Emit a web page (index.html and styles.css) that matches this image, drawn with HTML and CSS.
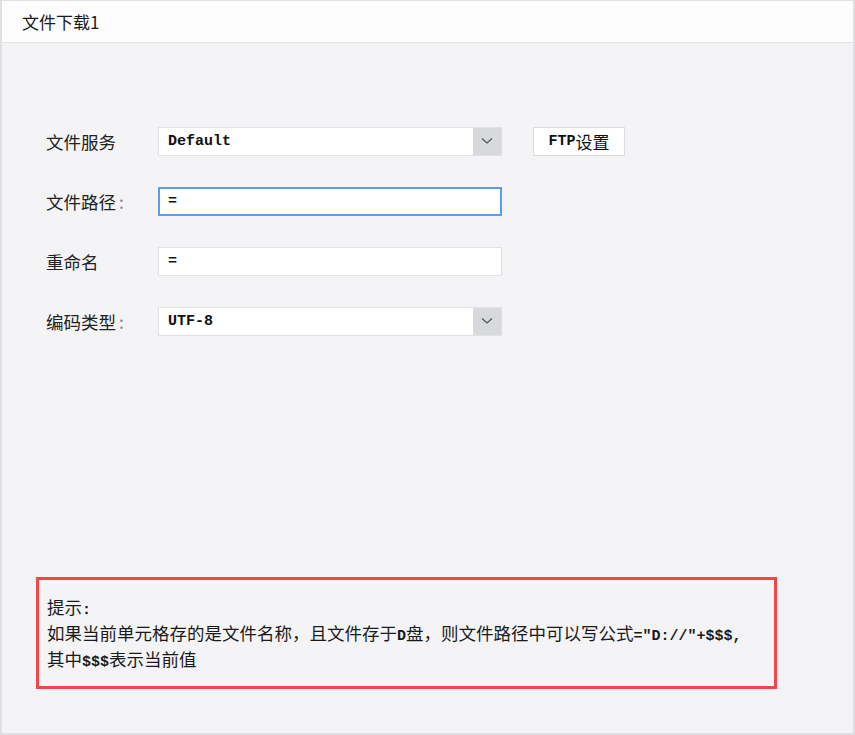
FILE: index.html
```html
<!DOCTYPE html>
<html lang="zh">
<head>
<meta charset="utf-8">
<title>文件下载1</title>
<link rel="stylesheet" href="styles.css">
</head>
<body>
<div class="frame">
  <div class="titlebar">文件下载1</div>
  <div class="content">
    <div class="form">
      <div class="row">
        <div class="label">文件服务</div>
        <div class="select">
          <span class="value">Default</span>
          <span class="arrow"><svg width="12" height="8" viewBox="0 0 12 8"><path d="M1 1.5 L6 6 L11 1.5" fill="none" stroke="#555" stroke-width="1.3"/></svg></span>
        </div>
        <div class="btn"><span class="btn-latin">FTP</span>设置</div>
      </div>
      <div class="row">
        <div class="label">文件路径<span class="colon">:</span></div>
        <div class="input focused"><span class="value">=</span></div>
      </div>
      <div class="row">
        <div class="label">重命名</div>
        <div class="input"><span class="value">=</span></div>
      </div>
      <div class="row">
        <div class="label">编码类型<span class="colon">:</span></div>
        <div class="select">
          <span class="value">UTF-8</span>
          <span class="arrow"><svg width="12" height="8" viewBox="0 0 12 8"><path d="M1 1.5 L6 6 L11 1.5" fill="none" stroke="#555" stroke-width="1.3"/></svg></span>
        </div>
      </div>
    </div>
    <div class="hint">
      <div>提示<span class="mono">:</span></div>
      <div>如果当前单元格存的是文件名称，且文件存于<span class="mono">D</span>盘，则文件路径中可以写公式<span class="mono">="D://"+$$$,</span></div>
      <div>其中<span class="mono">$$$</span>表示当前值</div>
    </div>
  </div>
</div>
</body>
</html>
```

FILE: styles.css
```css
* { box-sizing: border-box; }
html, body { margin: 0; padding: 0; }
body {
  font-family: "Noto Sans CJK SC", "Noto Sans", sans-serif;
  color: #222;
  background: #f4f4f6;
}
.frame {
  width: 855px;
  height: 735px;
  border: 2px solid #e0e0e2;
  border-top-width: 1px;
  background: #f4f4f6;
  display: flex;
  flex-direction: column;
}
.titlebar {
  height: 42px;
  background: #fdfdfd;
  border-bottom: 1px solid #e2e2e4;
  padding-left: 20px;
  font-size: 17px;
  line-height: 41px;
  color: #1a1a1a;
}
.content {
  flex: 1;
  display: flex;
  flex-direction: column;
  padding: 0 0 0 34px;
}
.form {
  margin-top: 84px;
  display: flex;
  flex-direction: column;
  gap: 32px;
}
.row {
  display: flex;
  align-items: center;
  height: 28px;
}
.label {
  width: 122px;
  padding-left: 10px;
  font-size: 17.5px;
  color: #222;
}
.colon { color: #8a7f9a; padding-left: 3px; }
.select, .input {
  width: 344px;
  height: 29px;
  background: #fff;
  border: 1px solid #e1e1e3;
  display: flex;
  align-items: center;
}
.input.focused { border: 2px solid #5c9ded; }
.value {
  flex: 1;
  padding-left: 9px;
  font-family: "Liberation Mono", monospace;
  font-weight: bold;
  font-size: 15px;
  color: #111;
}
.input.focused .value { padding-left: 8px; }
.arrow {
  width: 28px;
  height: 100%;
  background: #d8d9dc;
  display: flex;
  align-items: center;
  justify-content: center;
}
.btn {
  margin-left: 31px;
  width: 92px;
  height: 29px;
  background: #fff;
  border: 1px solid #dcdcde;
  display: flex;
  align-items: center;
  justify-content: center;
  font-size: 17px;
  color: #111;
}
.btn-latin {
  font-family: "Liberation Mono", monospace;
  font-weight: bold;
  font-size: 15px;
}
.hint {
  margin-top: 242px;
  width: 741px;
  height: 112px;
  border: 3px solid #f2454b;
  padding: 16px 0 0 8px;
  font-size: 17.5px;
  line-height: 22px;
  color: #1a1a1a;
}
.mono {
  font-family: "Liberation Mono", monospace;
  font-weight: bold;
  font-size: 15px;
}
```
